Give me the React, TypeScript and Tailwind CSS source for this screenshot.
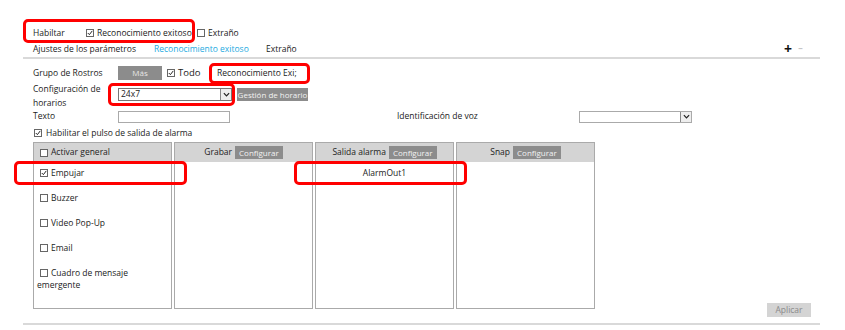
import React from "react";

const Box = ({ checked = false }: { checked?: boolean }) => (
  <span className="inline-flex w-[8px] h-[8px] border border-[#666] bg-white items-center justify-center shrink-0">
    {checked && (
      <svg viewBox="0 0 8 8" className="w-[6px] h-[6px]">
        <path d="M1 4 L3.2 6.2 L7 1.2" stroke="#222" strokeWidth="1.3" fill="none" />
      </svg>
    )}
  </span>
);

const Arrow = () => (
  <span className="ml-auto w-[11px] h-full border-l border-[#888] bg-[#eee] flex items-center justify-center">
    <svg viewBox="0 0 8 8" className="w-[7px] h-[7px]">
      <path d="M1 2.5 L4 5.5 L7 2.5" stroke="#222" strokeWidth="1.4" fill="none" />
    </svg>
  </span>
);

const GrayBtn = ({ label, className = "" }: { label: string; className?: string }) => (
  <span className={`inline-flex items-center justify-center whitespace-nowrap bg-[#8c8c8c] text-[#f2f2f2] text-[8px] h-[13px] px-[4px] ${className}`}>
    {label}
  </span>
);

const Column = ({ title, children }: { title: string; children?: React.ReactNode }) => (
  <div className="w-[139px] h-[167px] border border-[#aaa] flex flex-col">
    <div className="h-[19px] bg-[#d4d4d4] flex items-center justify-center">
      <span>{title}</span>
      <GrayBtn label="Configurar" className="ml-[3px]" />
    </div>
    {children}
  </div>
);

const Mark = ({ className }: { className: string }) => (
  <div className={`absolute border-[3px] border-[#ff0000] rounded-[5px] ${className}`} />
);

const items = ["Buzzer", "Video Pop-Up", "Email"];

export default function App() {
  return (
    <div className="relative w-[845px] h-[330px] bg-white text-[8.5px] text-[#222] font-['Open_Sans',sans-serif] leading-none whitespace-nowrap">
      <div className="pt-[26px] ml-[23px] w-[797px]">
        <div className="h-[14px] flex items-center pl-[10px]">
          <span className="w-[53px]">Habiltar</span>
          <span className="flex items-center gap-[3px] w-[111px]">
            <Box checked />
            Reconocimiento exitoso
          </span>
          <span className="flex items-center gap-[3px]">
            <Box />
            Extraño
          </span>
        </div>
        <div className="mt-[2px] h-[14px] flex items-center pl-[10px] pr-[17px]">
          <span className="w-[121px]">Ajustes de los parámetros</span>
          <span className="w-[112px] text-[#25aae1]">Reconocimiento exitoso</span>
          <span>Extraño</span>
          <span className="ml-auto text-[14px] font-bold text-[#111]">+</span>
          <span className="ml-[6px] text-[#999]">−</span>
        </div>
        <div className="h-[2px] bg-[#d9d9d9] mt-[1px]" />

        <div className="mt-[7px] h-[14px] flex items-center pl-[10px]">
          <span className="w-[85px]">Grupo de Rostros</span>
          <span className="w-[44px] h-[14px] bg-[#8c8c8c] text-[#e6e6e6] text-[8px] flex items-center justify-center">Más</span>
          <span className="ml-[5px] w-[50px] flex items-center gap-[3px]">
            <Box checked />
            <span className="text-[9.5px]">Todo</span>
          </span>
          <span>Reconocimiento Exi;</span>
        </div>

        <div className="mt-[2px] h-[27px] flex items-start pl-[10px]">
          <span className="w-[85px] leading-[14px]">
            Configuración de
            <br />
            horarios
          </span>
          <span className="mt-[6px] w-[114px] h-[13px] border border-[#777] flex items-center pl-[2px]">
            <span>24x7</span>
            <Arrow />
          </span>
          <GrayBtn label="Gestión de horario" className="mt-[6px] ml-[5px] w-[71px] !px-0" />
        </div>

        <div className="mt-[1px] h-[13px] flex items-center pl-[10px]">
          <span className="w-[85px]">Texto</span>
          <span className="w-[112px] h-[12px] border border-[#aaa]" />
          <span className="ml-[167px] w-[182px]">Identificación de voz</span>
          <span className="w-[113px] h-[12px] border border-[#aaa] flex">
            <Arrow />
          </span>
        </div>

        <div className="mt-[4px] h-[12px] flex items-center gap-[4px] pl-[11px]">
          <Box checked />
          Habilitar el pulso de salida de alarma
        </div>

        <div className="mt-[3px] h-[175px] flex pl-[10px] pr-[9px]">
          <div className="flex gap-[2px] self-start">
            <div className="w-[139px] h-[167px] border border-[#aaa] flex flex-col">
              <div className="h-[19px] bg-[#d4d4d4] flex items-center pl-[6px] gap-[3px]">
                <Box />
                Activar general
              </div>
              <div className="pl-[3px] leading-[11px]">
                <div className="mt-[5px] flex items-center gap-[3px] pl-[3px]">
                  <Box checked />
                  Empujar
                </div>
                {items.map((t) => (
                  <div key={t} className="mt-[14px] flex items-center gap-[3px] pl-[3px]">
                    <Box />
                    {t}
                  </div>
                ))}
                <div className="mt-[14px]">
                  <span className="inline-flex items-center gap-[3px] pl-[3px]">
                    <Box />
                    Cuadro de mensaje
                  </span>
                  <br />
                  emergente
                </div>
              </div>
            </div>
            <Column title="Grabar" />
            <Column title="Salida alarma">
              <div className="mt-[5px] leading-[11px] text-center">AlarmOut1</div>
            </Column>
            <Column title="Snap" />
          </div>
          <span className="ml-auto self-end w-[44px] h-[14px] bg-[#d4d4d4] text-[#8a8a8a] flex items-center justify-center">
            Aplicar
          </span>
        </div>
        <div className="mt-[6px] h-[2px] bg-[#d9d9d9]" />
      </div>

      <Mark className="left-[23px] top-[19px] w-[172px] h-[24px]" />
      <Mark className="left-[209px] top-[63px] w-[101px] h-[21px]" />
      <Mark className="left-[108px] top-[83px] w-[127px] h-[23px]" />
      <Mark className="left-[14px] top-[161px] w-[173px] h-[24px]" />
      <Mark className="left-[294px] top-[161px] w-[173px] h-[24px]" />
    </div>
  );
}
